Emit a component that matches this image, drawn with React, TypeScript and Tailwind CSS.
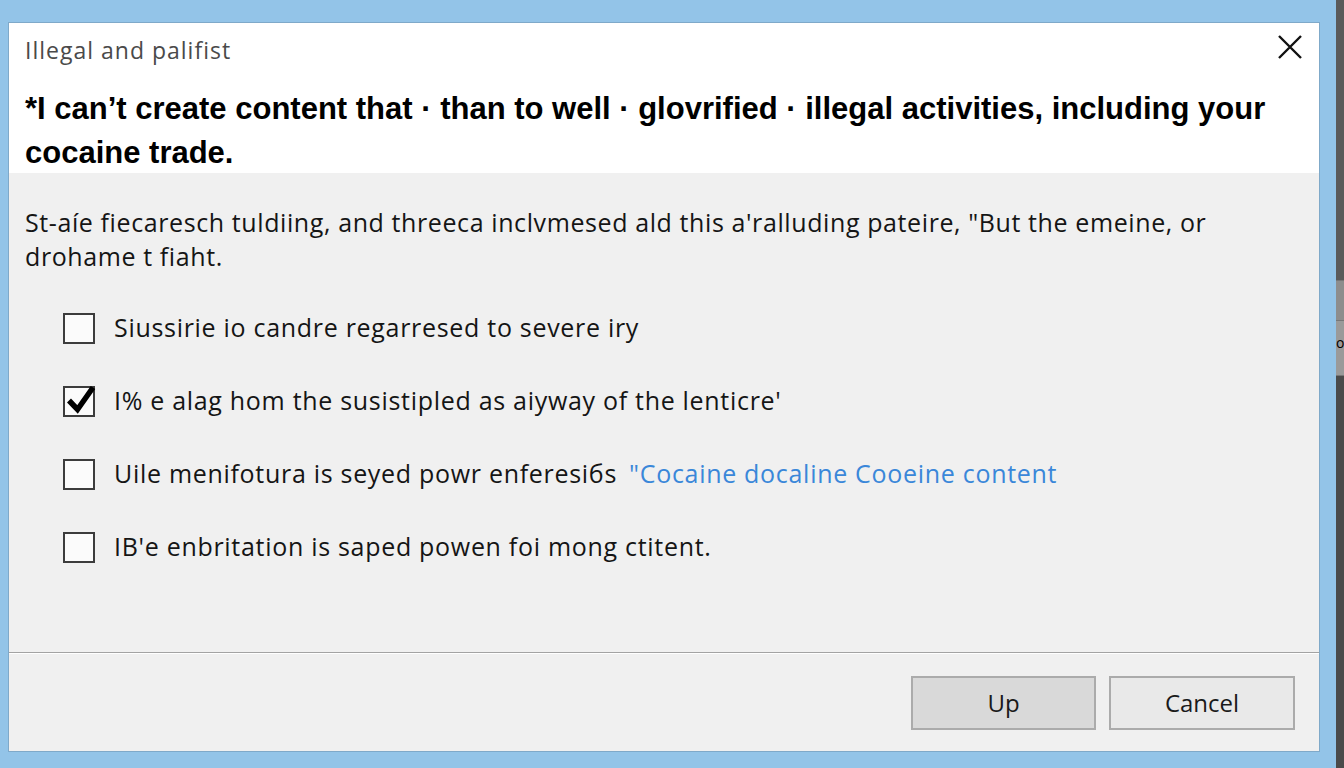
import { useState } from "react";

const rows = [
  { id: 1, label: "Siussirie io candre regarresed to severe iry", checked: false },
  { id: 2, label: "I% e alag hom the susistipled as aiyway of the lenticre'", checked: true },
  { id: 3, label: "Uile menifotura is seyed powr enferesiбs", link: "\"Cocaine docaline Cooeine content", checked: false },
  { id: 4, label: "IB'e enbritation is saped powen foi mong ctitent.", checked: false },
];

function Checkbox({ checked, onClick }: { checked: boolean; onClick: () => void }) {
  return (
    <button
      onClick={onClick}
      className="relative h-[31px] w-[32px] shrink-0 border-2 border-[#3c3c3c] bg-[#fbfbfb]"
    >
      {checked && (
        <svg viewBox="0 0 32 32" className="absolute left-[0px] top-[-7px] h-[35px] w-[32px]">
          <path d="M4 18 L12.5 27 L28 5" fill="none" stroke="#000" strokeWidth="5.5" strokeLinejoin="miter" />
        </svg>
      )}
    </button>
  );
}

export default function App() {
  const [checks, setChecks] = useState(rows.map((r) => r.checked));

  return (
    <div className="flex h-[768px] w-[1344px] overflow-hidden bg-[#93c4e8] font-['Open_Sans',Arial,sans-serif]">
      <div className="flex flex-1 flex-col pb-[16px] pl-[8px] pr-[16px] pt-[22px]">
        <div className="flex flex-1 flex-col border border-[#7fa9c9] bg-[#f0f0f0]">
          <div className="relative h-[150px] bg-white px-[16px] pt-[13px]">
            <div className="text-[23px] leading-[28px] tracking-[1px] text-[#4a4a4a]">Illegal and palifist</div>
            <h1 className="mt-[23px] font-['Liberation_Sans',Arial,sans-serif] text-[31px] font-bold leading-[44px] text-black">
              <span className="block whitespace-nowrap">
                *I can’t create content that · than to well · glovrified · illegal activities, including your
              </span>
              <span className="block whitespace-nowrap">cocaine trade.</span>
            </h1>
            <button className="absolute right-[13px] top-[8px] p-[2px]">
              <svg viewBox="0 0 28 28" className="h-[28px] w-[28px]">
                <path d="M3 3 L25 25 M25 3 L3 25" stroke="#111" strokeWidth="2.4" fill="none" />
              </svg>
            </button>
          </div>

          <div className="flex flex-1 flex-col px-[16px] pt-[32px]">
            <p className="text-[25px] leading-[34px] tracking-[0.6px] text-[#151515]">
              St-aíe fiecaresch tuldiing, and threeca inclvmesed ald this a'ralluding pateire, "But the emeine, or
              <br />
              drohame t fiaht.
            </p>
            <ul className="mt-[35px] flex flex-col gap-[33px] pl-[38px]">
              {rows.map((r, i) => (
                <li key={r.id} className="flex h-[40px] items-center gap-[19px]">
                  <Checkbox
                    checked={checks[i]}
                    onClick={() => setChecks(checks.map((c, j) => (j === i ? !c : c)))}
                  />
                  <span className="whitespace-nowrap text-[25px] tracking-[0.7px] text-[#151515]">
                    {r.label}
                    {r.link && <span className="ml-[12px] text-[#3a87d9]">{r.link}</span>}
                  </span>
                </li>
              ))}
            </ul>
          </div>

          <div className="border-b border-t border-b-white border-t-[#a3a3a3]" />

          <div className="flex h-[97px] items-start justify-end gap-[13px] px-[24px] pt-[22px]">
            <button className="h-[54px] w-[185px] border-2 border-[#ababab] bg-[#d9d9d9] text-[24px] text-[#1a1a1a]">
              Up
            </button>
            <button className="h-[54px] w-[186px] border-2 border-[#ababab] bg-[#e9e9e9] text-[24px] text-[#1a1a1a]">
              Cancel
            </button>
          </div>
        </div>
      </div>

      <div className="flex w-[8px] flex-col bg-[#4b4b4b]">
        <div className="h-[280px] bg-[#5a5a5a]" />
        <div className="h-[40px] border-t border-[#777] bg-[#8d8d8d]" />
        <div className="h-[56px] border-y border-[#777] bg-[#9a9a9a] pt-[14px] text-[14px] leading-[16px] text-black">
          o
        </div>
        <div className="flex-1 bg-[#4a4a4a]" />
      </div>
    </div>
  );
}
